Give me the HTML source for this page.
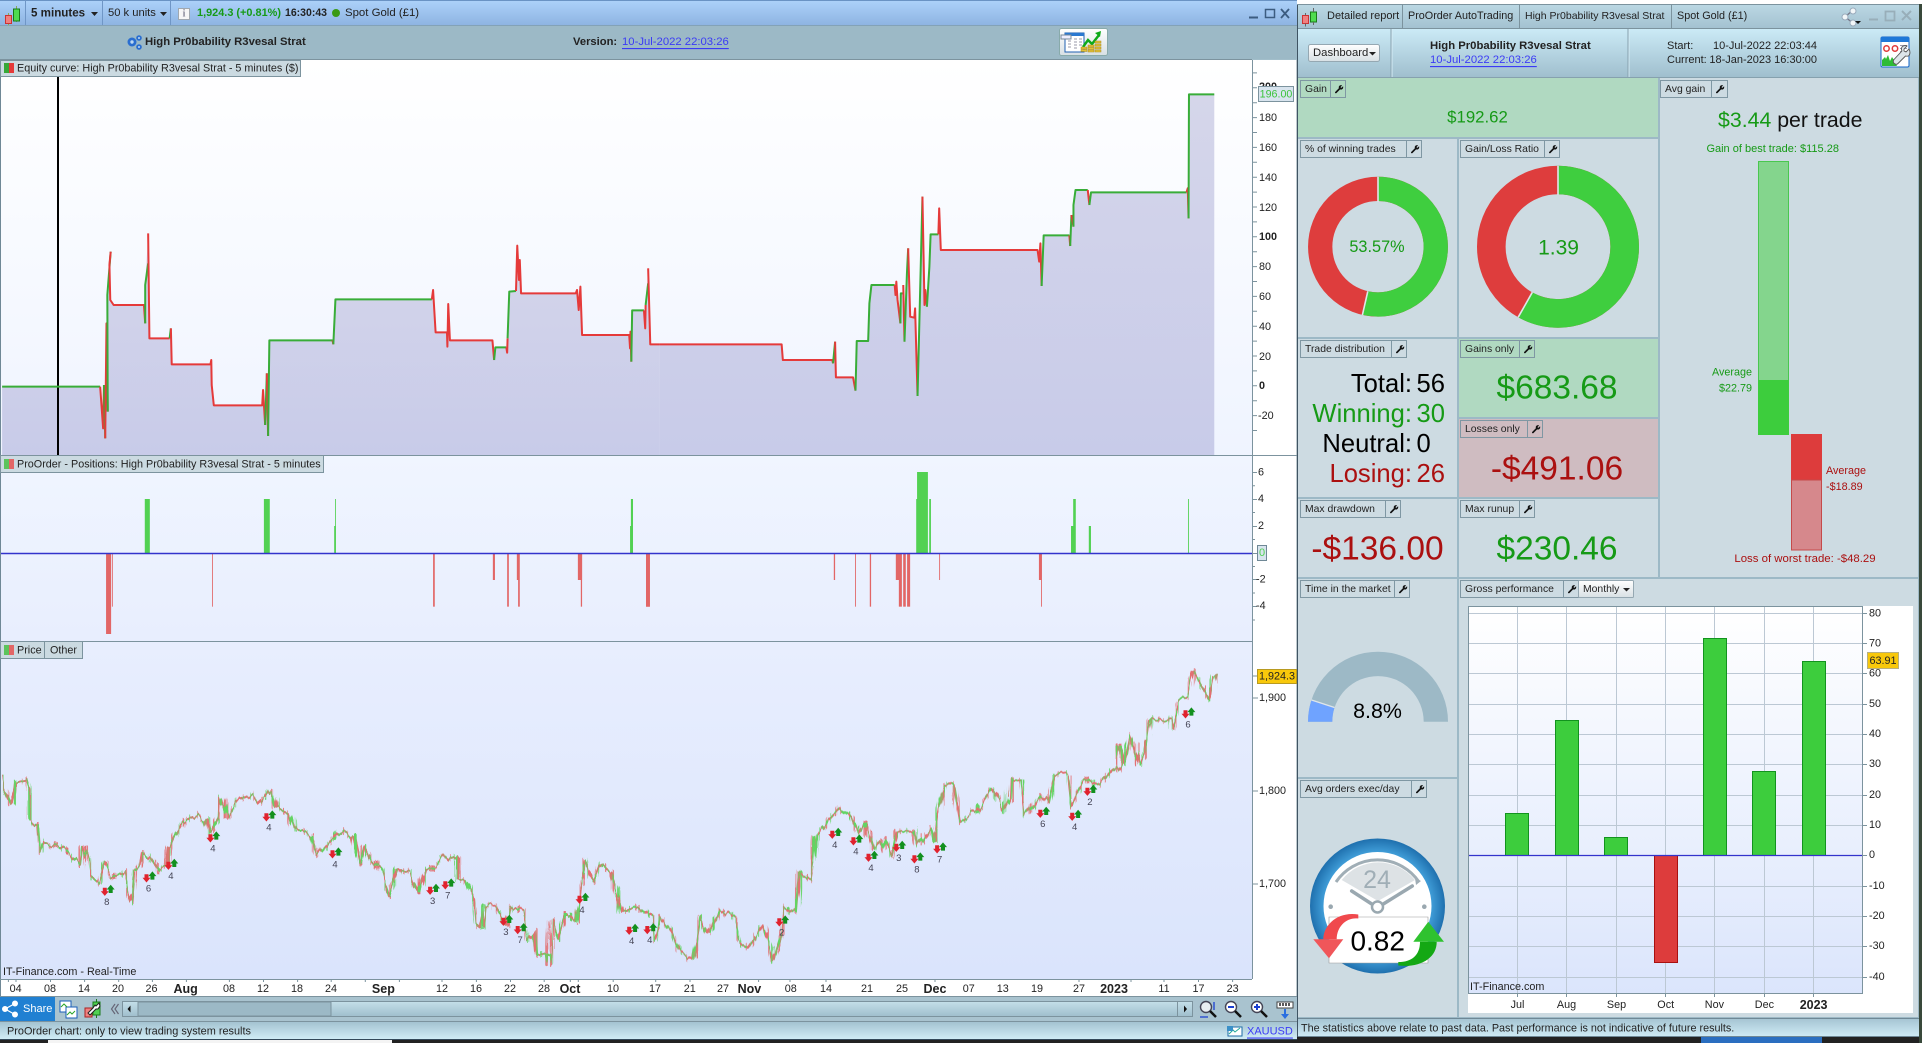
<!DOCTYPE html>
<html><head><meta charset="utf-8"><title>ProOrder report</title>
<style>
html,body{margin:0;padding:0;background:#222;overflow:hidden}
svg{display:block}
text{font-family:"Liberation Sans",Arial,sans-serif;font-size:11px;fill:#222;dominant-baseline:central;white-space:pre}
.b{font-weight:bold}.m{text-anchor:middle}.e{text-anchor:end}
.gr{fill:#169a16}.rd{fill:#ab1010}
.lk{fill:#3b3bf5;text-decoration:underline}
.ax{font-size:10.8px;fill:#222}
.lbt{font-size:10.4px}
.lb{fill:none;stroke:#7f97a3;stroke-width:1}
.eq polyline{fill:none;stroke-width:2;vector-effect:non-scaling-stroke;stroke-linejoin:round}
.eg{stroke:#38ad38}.er{stroke:#e53a3a}
.pg rect{fill:#52d152}.pr rect{fill:#e26666}
.n{font-size:9.5px;fill:#445}
</style></head>
<body>
<svg xmlns="http://www.w3.org/2000/svg" width="1922" height="1043" viewBox="0 0 1922 1043">
<defs>
<linearGradient id="gTop" x1="0" y1="0" x2="0" y2="1"><stop offset="0" stop-color="#add2fa"/><stop offset="1" stop-color="#8eb4e2"/></linearGradient>
<linearGradient id="gHead" x1="0" y1="0" x2="0" y2="1"><stop offset="0" stop-color="#cbeaf6"/><stop offset="1" stop-color="#a0bfce"/></linearGradient>
<linearGradient id="gTab" x1="0" y1="0" x2="0" y2="1"><stop offset="0" stop-color="#bcd8e4"/><stop offset="1" stop-color="#a4c2d1"/></linearGradient>
<linearGradient id="gStat" x1="0" y1="0" x2="0" y2="1"><stop offset="0" stop-color="#a4c3d1"/><stop offset="1" stop-color="#d0ecf6"/></linearGradient>
<linearGradient id="gEq" x1="0" y1="0" x2="0" y2="1"><stop offset="0" stop-color="#ffffff"/><stop offset="1" stop-color="#eff4ff"/></linearGradient>
<linearGradient id="gPos" x1="0" y1="0" x2="0" y2="1"><stop offset="0" stop-color="#f0f5ff"/><stop offset="1" stop-color="#e8eefe"/></linearGradient>
<linearGradient id="gPrice" x1="0" y1="0" x2="0" y2="1"><stop offset="0" stop-color="#e8eefe"/><stop offset="1" stop-color="#dae4fc"/></linearGradient>
<linearGradient id="gFill" x1="0" y1="0" x2="0" y2="1"><stop offset="0" stop-color="#d5d6ea"/><stop offset="1" stop-color="#c8cbe9"/></linearGradient>
<linearGradient id="gPlot" x1="0" y1="0" x2="0" y2="1"><stop offset="0" stop-color="#ffffff"/><stop offset="1" stop-color="#dbe5fc"/></linearGradient>
<linearGradient id="gBtn" x1="0" y1="0" x2="0" y2="1"><stop offset="0" stop-color="#ffffff"/><stop offset="1" stop-color="#d8e0e4"/></linearGradient>
<linearGradient id="gScr" x1="0" y1="0" x2="0" y2="1"><stop offset="0" stop-color="#c4dfe9"/><stop offset="1" stop-color="#9fbecc"/></linearGradient>
<radialGradient id="gRing" cx=".5" cy=".5" r=".5"><stop offset=".75" stop-color="#48a8e2"/><stop offset="1" stop-color="#1f70ae"/></radialGradient>
<g id="w"><path transform="translate(1.500 1.500) scale(.78)" d="M11 2.200 8.800 4.400 7.600 3.400 9.800 1.100C8.200.3 6.400.9 5.700 2.400c-.4.8-.3 1.600 0 2.300L1 9.400c-.5.6-.5 1.200 0 1.600s1.100.4 1.600-.1l4.600-4.600c.8.3 1.600.3 2.300 0 1.500-.7 2-2.600 1.500-4.100z" fill="#111"/></g>
<g id="m"><path d="M-2-4h4v3.500h2L0 4.200-4-.5h2z" fill="#e0222e"/><path d="M5.900-6.900 9.900-2.200h-2v3.500h-4v-3.500h-2z" fill="#12901e"/></g>
<pattern id="pCore" patternUnits="userSpaceOnUse" width="46.400" height="40">
<rect width="46.400" height="40" fill="#63d463"/>
<rect x="2.900" width="2.900" height="40" fill="#e27072"/>
<rect x="8.700" width="5.800" height="40" fill="#e27072"/>
<rect x="17.400" width="2.900" height="40" fill="#e27072"/>
<rect x="26.100" width="5.800" height="40" fill="#e27072"/>
<rect x="34.800" width="2.900" height="40" fill="#e27072"/>
<rect x="40.600" width="2.900" height="40" fill="#e27072"/>
</pattern>
<pattern id="pSpike" patternUnits="userSpaceOnUse" width="69.600" height="40">
<rect x="5.800" width="2.900" height="40" fill="#63d463"/>
<rect x="20.300" width="2.900" height="40" fill="#e27072"/>
<rect x="31.900" width="2.900" height="40" fill="#63d463"/>
<rect x="46.400" width="2.900" height="40" fill="#e27072"/>
<rect x="60.900" width="2.900" height="40" fill="#e27072"/>
</pattern>
<filter id="jit" filterUnits="userSpaceOnUse" x="0" y="642" width="1252" height="337" color-interpolation-filters="sRGB">
<feTurbulence type="fractalNoise" baseFrequency=".13 .006" numOctaves="3" seed="7" result="t"/>
<feDisplacementMap in="SourceGraphic" in2="t" scale="11" xChannelSelector="A" yChannelSelector="G"/>
</filter>
</defs>

<!-- base -->
<rect width="1922" height="1043" fill="#222"/>
<rect x="1297" y="0" width="625" height="4" fill="#fff"/>
<rect x="48" y="1040" width="344" height="3" fill="#f4f4f4"/>
<rect x="1701" y="1037" width="121" height="6" fill="#2a6ec0"/>
<rect x="1919" y="4" width="3" height="1039" fill="#39493b"/>

<!-- LEFT WINDOW -->
<rect x="0" y="0" width="1297" height="1039" fill="#a9c3cf"/>
<rect x="0" y="0" width="1297" height="25" fill="url(#gTop)"/>
<rect x="0" y="0" width="1297" height="1" fill="#6a93c4"/>
<path d="M25.500 0v25M102.500 0v25M170.500 0v25" stroke="#6f96c6" fill="none"/>
<path d="M0 25.500h1297" stroke="#6a8aa8"/>
<g>
<path d="M8.500 13v14M16.500 6v16" stroke="#8a5" fill="none"/>
<rect x="5.500" y="15.500" width="6" height="8" fill="#f08080" stroke="#c33"/>
<rect x="13.500" y="9" width="6" height="12" fill="#4fdb4f" stroke="#197a19"/>
</g>
<text x="31" y="13" class="b" style="font-size:11.600px">5 minutes</text>
<path d="M91 12h7l-3.500 4z" fill="#222"/>
<text x="108" y="13" style="font-size:11.200px">50 k units</text>
<path d="M160 12h7l-3.500 4z" fill="#222"/>
<rect x="178.500" y="8.500" width="11" height="11" fill="#f6f6f6" stroke="#a0a8b0"/>
<text x="184" y="14" class="m b" style="font-size:10px;fill:#889;font-family:'Liberation Serif',serif">i</text>
<text x="197" y="13" class="b gr" style="font-size:11px" textLength="84" lengthAdjust="spacingAndGlyphs">1,924.3 (+0.81%)</text>
<text x="285" y="13" class="b" style="font-size:11px" textLength="42" lengthAdjust="spacingAndGlyphs">16:30:43</text>
<circle cx="336" cy="13" r="4" fill="#3a9a14"/>
<text x="345" y="13" style="font-size:11.400px">Spot Gold (£1)</text>
<path d="M1249 17.500h9" stroke="#3c5c80" stroke-width="2"/>
<rect x="1265.500" y="9.500" width="9" height="8" fill="none" stroke="#3c5c80" stroke-width="1.500"/>
<path d="M1281 9l8 9M1289 9l-8 9" stroke="#3c5c80" stroke-width="1.800"/>

<rect x="0" y="25.500" width="1297" height="34" fill="#9cb9c6"/>
<g fill="#2a6ed0"><circle cx="132" cy="42" r="4.500"/><circle cx="139" cy="38" r="2.800"/><circle cx="139" cy="47" r="2.800"/></g>
<g fill="#bcd8f4"><circle cx="132" cy="42" r="1.700"/><circle cx="139" cy="38" r="1"/><circle cx="139" cy="47" r="1"/></g>
<text x="145" y="42" class="b" style="font-size:11.300px">High Pr0bability R3vesal Strat</text>
<text x="573" y="42" class="b" style="font-size:11.200px">Version:</text>
<text x="622" y="42" class="lk" style="font-size:11.300px">10-Jul-2022 22:03:26</text>

<rect x="1059.500" y="28.500" width="48" height="27" rx="2" fill="url(#gBtn)" stroke="#8aa"/>
<g>
<rect x="1065" y="33" width="19" height="19" fill="#fff" stroke="#1f5fb0"/>
<rect x="1065" y="33" width="19" height="3" fill="#2a78d0"/>
<rect x="1061" y="35" width="10" height="4" fill="#eef" stroke="#789"/>
<path d="M1068 41h3M1068 44h3M1068 47h3M1074 39h3M1074 42h3M1074 45h3M1074 48h3M1079 39h3M1079 42h3M1079 45h3" stroke="#99a" fill="none"/>
<path d="M1083 47l5-7 4 4 7-9" stroke="#0faa1a" stroke-width="2.500" fill="none"/><path d="M1095 33l6-2-1 6z" fill="#0faa1a"/>
<g fill="#e4c238" stroke="#a88a20" stroke-width=".5"><rect x="1081" y="47" width="6" height="2"/><rect x="1081" y="49.500" width="6" height="2"/><rect x="1088" y="45" width="6" height="2"/><rect x="1088" y="47.500" width="6" height="2"/><rect x="1088" y="50" width="6" height="2"/><rect x="1095" y="41" width="6" height="2"/><rect x="1095" y="44" width="6" height="2"/><rect x="1095" y="47" width="6" height="2"/><rect x="1095" y="50" width="6" height="2"/></g>
</g>

<!-- chart backgrounds -->
<rect x="0" y="60" width="1297" height="395" fill="url(#gEq)"/>
<rect x="0" y="455" width="1297" height="186" fill="url(#gPos)"/>
<rect x="0" y="641" width="1297" height="338" fill="url(#gPrice)"/>
<rect x="0" y="979" width="1297" height="18" fill="#fff"/>
<rect x="1253" y="60" width="44" height="919" fill="#fff"/>

<!-- equity fill -->
<polygon transform="scale(.42088 .33333)" fill="url(#gFill)" points="5,1160 238,1160 245,1285 247,1155 250,1315 253,970 256,1235 255,885 263,755 262,900 270,915 342,915 345,970 345,855 352,700 355,1015 403,1015 406,985 408,1093 500,1093 503,1155 508,1216 623,1216 625,1170 630,1275 634,1120 637,1308 640,1021 790,1021 792,1033 797,898 1026,898 1029,870 1035,997 1062,997 1063,1040 1065,912 1069,1021 1170,1021 1174,1080 1177,1042 1203,1042 1205,1058 1206,1015 1210,875 1226,873 1229,737 1233,840 1235,780 1238,880 1368,880 1371,870 1375,930 1379,860 1383,1005 1495,1005 1497,1045 1498,995 1500,1085 1502,931 1530,931 1533,985 1534,915 1540,805 1545,1033 1568,1033 1568,1365 5,1365"/>
<polygon transform="translate(660 0) scale(.40816 .33333)" fill="url(#gFill)" points="0,1033 298,1033 301,1080 422,1080 424,1090 429,1025 431,1132 473,1132 479,1172 482,1023 510,1023 513,910 518,855 575,855 577,885 579,845 582,900 589,970 590,880 594,880 596,855 599,1025 605,820 608,745 613,950 623,953 625,925 631,1188 640,740 643,590 648,915 650,870 654,920 660,800 663,703 682,703 684,625 688,750 925,750 929,785 932,730 935,858 940,706 1003,706 1005,738 1008,645 1013,680 1013,615 1018,570 1048,570 1052,615 1056,577 1290,577 1293,565 1295,655 1296,283 1358,283 1358,1365 0,1365"/>
<rect x="57" y="77" width="2" height="378" fill="#000"/>
<!-- equity lines -->
<g class="eq" transform="scale(.42088 .33333)">
<polyline class="eg" points="5,1160 238,1160"/>
<polyline class="er" points="238,1160 245,1285 247,1155"/>
<polyline class="eg" points="247,1155 250,1315"/>
<polyline class="er" points="250,1315 253,970 256,1235"/>
<polyline class="eg" points="256,1235 255,885 263,755"/>
<polyline class="er" points="263,755 260,795 262,900 270,915 342,915 345,970"/>
<polyline class="eg" points="345,970 345,855 352,790"/>
<polyline class="er" points="352,700 355,1015 403,1015"/>
<polyline class="eg" points="403,1015 406,985"/>
<polyline class="er" points="406,985 408,1093 500,1093 502,1080 503,1155 508,1216 623,1216 625,1170 630,1275"/>
<polyline class="eg" points="630,1275 634,1120"/>
<polyline class="er" points="634,1120 637,1308"/>
<polyline class="eg" points="637,1308 640,1021 790,1021"/>
<polyline class="er" points="790,1021 792,1033"/>
<polyline class="eg" points="792,1033 797,898 1026,898"/>
<polyline class="er" points="1026,898 1029,870 1035,997 1062,997 1063,1040 1065,912 1069,1021 1170,1021 1174,1080"/>
<polyline class="eg" points="1174,1080 1177,1042 1203,1042"/>
<polyline class="er" points="1203,1042 1205,1058 1206,1015"/>
<polyline class="eg" points="1206,1015 1210,875 1226,873"/>
<polyline class="er" points="1226,873 1229,737 1233,840 1235,780 1238,880 1368,880 1371,870 1375,930 1379,860 1383,1005 1495,1005 1497,1045 1498,995 1500,1085"/>
<polyline class="eg" points="1500,1085 1502,931 1530,931"/>
<polyline class="er" points="1530,931 1533,985 1534,915"/>
<polyline class="eg" points="1534,915 1540,850"/>
<polyline class="er" points="1540,805 1545,1033 1568,1033"/>
</g>
<g class="eq" transform="translate(660 0) scale(.40816 .33333)">
<polyline class="er" points="0,1033 298,1033 301,1080 422,1080 424,1090"/>
<polyline class="eg" points="424,1090 429,1025"/>
<polyline class="er" points="429,1025 431,1132 473,1132 479,1172"/>
<polyline class="eg" points="479,1172 482,1023 510,1023 513,910 518,855 575,855"/>
<polyline class="er" points="575,855 577,885 579,845 582,900 589,970"/>
<polyline class="eg" points="589,970 590,880 594,880"/>
<polyline class="er" points="596,855 599,1025"/>
<polyline class="eg" points="599,1025 605,820 608,745"/>
<polyline class="er" points="608,745 613,950 623,953 625,925 631,1188"/>
<polyline class="eg" points="631,1188 640,740 643,590"/>
<polyline class="er" points="643,590 648,915 650,870 654,920"/>
<polyline class="eg" points="654,920 660,800 663,703 682,703"/>
<polyline class="er" points="682,703 684,625 688,750 925,750 929,785 932,730 935,858"/>
<polyline class="eg" points="935,858 940,706 1003,706"/>
<polyline class="er" points="1003,706 1005,738"/>
<polyline class="eg" points="1005,738 1008,645"/>
<polyline class="er" points="1008,645 1013,680"/>
<polyline class="eg" points="1013,680 1013,615 1018,570 1048,570"/>
<polyline class="er" points="1048,570 1052,615"/>
<polyline class="eg" points="1052,615 1056,577 1290,577"/>
<polyline class="er" points="1290,577 1293,565 1295,655"/>
<polyline class="eg" points="1295,655 1296,283 1358,283"/>
</g>

<!-- panel lines -->
<path d="M.5 60v937" stroke="#6f8896" fill="none"/>
<path d="M0 59.500h1252M0 455.500h1297M0 641.500h1252M0 979.500h1252" stroke="#7c939e" fill="none"/>
<path d="M1252.500 60v919" stroke="#7c939e" fill="none"/>
<path d="M1297 60v937" stroke="#7c939e" fill="none"/>

<!-- equity axis -->
<path stroke="#7c939e" fill="none" d="M1252 72.900h5M1252 87.800h5M1252 102.700h5M1252 117.600h5M1252 132.500h5M1252 147.400h5M1252 162.300h5M1252 177.200h5M1252 192.100h5M1252 207h5M1252 221.900h5M1252 236.800h5M1252 251.700h5M1252 266.600h5M1252 281.500h5M1252 296.400h5M1252 311.300h5M1252 326.200h5M1252 341.100h5M1252 356h5M1252 370.900h5M1252 385.800h5M1252 400.700h5M1252 415.600h5M1252 430.500h5"/>
<g>
<text x="1259" y="87" class="ax b">200</text>
<text x="1259" y="118" class="ax">180</text>
<text x="1259" y="148" class="ax">160</text>
<text x="1259" y="178" class="ax">140</text>
<text x="1259" y="208" class="ax">120</text>
<text x="1259" y="237" class="ax b">100</text>
<text x="1259" y="267" class="ax">80</text>
<text x="1259" y="297" class="ax">60</text>
<text x="1259" y="327" class="ax">40</text>
<text x="1259" y="357" class="ax">20</text>
<text x="1259" y="386" class="ax b">0</text>
<text x="1258" y="416" class="ax">-20</text>
</g>
<rect x="1258.500" y="86.500" width="35" height="15" fill="#d8e4ee" stroke="#7c939e"/>
<text x="1276" y="94.500" class="m" style="fill:#3cc43c;font-size:10.700px">196.00</text>

<!-- legends -->
<rect x=".5" y="60.500" width="300" height="16" fill="#cbdae1" stroke="#7c939e"/>
<rect x="4" y="63" width="5" height="10" fill="#38a838"/><rect x="9" y="63" width="5" height="10" fill="#e53a3a"/>
<text x="17" y="68.500" style="font-size:10.800px">Equity curve: High Pr0bability R3vesal Strat - 5 minutes ($)</text>

<rect x=".5" y="455.500" width="323" height="17" fill="#cbdae1" stroke="#7c939e"/>
<rect x="4" y="459" width="5" height="10" fill="#5cc45c"/><rect x="9" y="459" width="5" height="10" fill="#e26666"/>
<text x="17" y="464.500" style="font-size:10.800px">ProOrder - Positions: High Pr0bability R3vesal Strat - 5 minutes</text>

<rect x=".5" y="641.500" width="82" height="17" fill="#cbdae1" stroke="#7c939e"/>
<path d="M44.500 642v16" stroke="#7c939e"/>
<rect x="4" y="645" width="5" height="10" fill="#5cc45c"/><rect x="9" y="645" width="5" height="10" fill="#e26666"/>
<text x="17" y="650.500" style="font-size:10.800px">Price</text>
<text x="50" y="650.500" style="font-size:10.800px">Other</text>

<!-- positions bars -->
<g transform="translate(0 440) scale(.42088 .33333)">
<g class="pg">
<rect x="344" y="177" width="12" height="163"/><rect x="627" y="177" width="14" height="163"/>
<rect x="794" y="258" width="4" height="82"/><rect x="796" y="177" width="2" height="163"/>
<rect x="1499" y="177" width="5" height="163"/><rect x="1497" y="258" width="3" height="82"/>
</g>
<g class="pr">
<rect x="252" y="340" width="12" height="242"/><rect x="266" y="340" width="2" height="160"/>
<rect x="504" y="340" width="2" height="160"/><rect x="1029" y="340" width="4" height="160"/>
<rect x="1171" y="340" width="5" height="80"/><rect x="1205" y="340" width="4" height="160"/>
<rect x="1228" y="340" width="5" height="80"/><rect x="1231" y="340" width="4" height="160"/>
<rect x="1373" y="340" width="10" height="80"/><rect x="1380" y="340" width="3" height="160"/>
<rect x="1535" y="340" width="9" height="160"/>
</g>
</g>
<g transform="translate(620 460) scale(.43367 .33333)">
<g class="pg">
<rect x="685" y="36" width="25" height="244"/><rect x="683" y="117" width="3" height="163"/><rect x="713" y="117" width="4" height="163"/>
<rect x="1045" y="117" width="6" height="163"/><rect x="1040" y="198" width="6" height="82"/><rect x="1081" y="198" width="5" height="82"/><rect x="1310" y="117" width="2" height="163"/>
</g>
<g class="pr">
<rect x="60" y="280" width="9" height="160"/>
<rect x="493" y="280" width="3" height="80"/><rect x="542" y="280" width="2" height="160"/><rect x="576" y="280" width="3" height="160"/>
<rect x="636" y="280" width="8" height="80"/><rect x="643" y="280" width="7" height="160"/><rect x="653" y="280" width="6" height="160"/><rect x="662" y="280" width="7" height="160"/>
<rect x="736" y="280" width="2" height="80"/><rect x="966" y="280" width="6" height="80"/><rect x="971" y="280" width="2" height="160"/>
</g>
</g>
<path d="M1 553.500h1251" stroke="#3333cc" stroke-width="1.400"/>
<path stroke="#7c939e" fill="none" d="M1252 472.500h5M1252 485.800h3M1252 499.500h5M1252 512.500h3M1252 526.500h5M1252 539.500h3M1252 553.500h5M1252 566.500h3M1252 579.500h5M1252 593h3M1252 606.500h5M1252 620h3"/>
<text x="1258" y="472.500" class="ax">6</text><text x="1258" y="499" class="ax">4</text><text x="1258" y="526" class="ax">2</text>
<rect x="1257.500" y="545.500" width="9" height="15" fill="#d8e4ee" stroke="#6f8896"/>
<text x="1262" y="553" class="m" style="fill:#4fd04f">0</text>
<text x="1256" y="579.500" class="ax">-2</text><text x="1256" y="606" class="ax">-4</text>

<!-- price series -->
<g filter="url(#jit)" fill="none" stroke-linejoin="round" stroke-linecap="butt">
<g transform="translate(0 740) scale(.42088 .33333)">
<polyline stroke="url(#pSpike)" stroke-width="17" points="5,100 10,140 28,190 35,130 65,125 72,150 72,240 90,255 95,340 105,310 135,315 165,340 190,370 195,320 210,360 215,410 235,430 250,370 265,410 295,395 305,460 313,488 320,390 335,375 340,340 360,360 375,390 400,380 403,325 415,290 435,250 470,220 490,240 498,280 520,230 522,170 540,235 565,185 600,160 620,190 645,150 655,200 690,225 700,265 740,285 755,345 780,310 815,270 840,290 855,375 865,320 885,365 905,385 925,465 945,390 975,395 995,450 1010,385 1040,375 1065,345 1085,355 1085,420 1110,425 1125,470 1130,540 1145,560 1150,500 1175,500 1200,550 1210,490 1240,510 1255,600 1270,580 1275,650 1300,640 1305,668 1310,540 1325,595 1345,520 1365,540 1375,440 1390,360 1410,420 1425,370 1450,400 1475,520 1520,500 1550,530 1555,600 1568,560"/>
<polyline stroke="url(#pCore)" stroke-width="5.500" points="5,100 10,140 28,190 35,130 65,125 72,150 72,240 90,255 95,340 105,310 135,315 165,340 190,370 195,320 210,360 215,410 235,430 250,370 265,410 295,395 305,460 313,488 320,390 335,375 340,340 360,360 375,390 400,380 403,325 415,290 435,250 470,220 490,240 498,280 520,230 522,170 540,235 565,185 600,160 620,190 645,150 655,200 690,225 700,265 740,285 755,345 780,310 815,270 840,290 855,375 865,320 885,365 905,385 925,465 945,390 975,395 995,450 1010,385 1040,375 1065,345 1085,355 1085,420 1110,425 1125,470 1130,540 1145,560 1150,500 1175,500 1200,550 1210,490 1240,510 1255,600 1270,580 1275,650 1300,640 1305,668 1310,540 1325,595 1345,520 1365,540 1375,440 1390,360 1410,420 1425,370 1450,400 1475,520 1520,500 1550,530 1555,600 1568,560"/>
</g>
<g transform="translate(640 640) scale(.42088 .33333)">
<polyline stroke="url(#pSpike)" stroke-width="17" points="47,860 50,830 75,870 100,935 125,955 140,830 160,880 190,810 225,840 235,900 260,920 290,860 300,900 312,965 335,870 340,790 370,820 378,700 410,720 418,590 445,540 475,500 500,530 520,580 535,550 555,630 575,600 597,650 610,575 650,570 660,620 695,560 700,600 705,530 720,445 745,430 760,545 800,510 840,445 865,510 878,480 880,420 905,425 915,525 955,470 970,490 985,400 1015,405 1023,495 1060,420 1090,440 1125,390 1140,370 1135,315 1145,370 1160,280 1183,380 1200,340 1212,235 1260,240 1265,265 1285,180 1300,170 1312,95 1330,130 1355,180 1365,105"/>
<polyline stroke="url(#pCore)" stroke-width="5.500" points="47,860 50,830 75,870 100,935 125,955 140,830 160,880 190,810 225,840 235,900 260,920 290,860 300,900 312,965 335,870 340,790 370,820 378,700 410,720 418,590 445,540 475,500 500,530 520,580 535,550 555,630 575,600 597,650 610,575 650,570 660,620 695,560 700,600 705,530 720,445 745,430 760,545 800,510 840,445 865,510 878,480 880,420 905,425 915,525 955,470 970,490 985,400 1015,405 1023,495 1060,420 1090,440 1125,390 1140,370 1135,315 1145,370 1160,280 1183,380 1200,340 1212,235 1260,240 1265,265 1285,180 1300,170 1312,95 1330,130 1355,180 1365,105"/>
</g>
</g>

<!-- trade markers -->
<g>
<g transform="translate(104.800 891.700)"><use href="#m"/><text x="2" y="10.700" class="n m">8</text></g>
<g transform="translate(146.500 878.300)"><use href="#m"/><text x="2" y="10.700" class="n m">6</text></g>
<g transform="translate(168.400 865.700)"><use href="#m"/><text x="2.500" y="10.700" class="n m">4</text></g>
<g transform="translate(210.400 838.300)"><use href="#m"/><text x="2.500" y="10.700" class="n m">4</text></g>
<g transform="translate(266.400 817.300)"><use href="#m"/><text x="2.500" y="10.700" class="n m">4</text></g>
<g transform="translate(332.500 854.300)"><use href="#m"/><text x="2.500" y="10.700" class="n m">4</text></g>
<g transform="translate(430.100 890.700)"><use href="#m"/><text x="2.500" y="10.700" class="n m">3</text></g>
<g transform="translate(445.300 885.300)"><use href="#m"/><text x="2.500" y="10.700" class="n m">7</text></g>
<g transform="translate(503.400 921.700)"><use href="#m"/><text x="2.500" y="10.700" class="n m">3</text></g>
<g transform="translate(517.700 930)"><use href="#m"/><text x="2.500" y="10.700" class="n m">7</text></g>
<g transform="translate(579.500 899.700)"><use href="#m"/><text x="2.500" y="10.700" class="n m">4</text></g>
<g transform="translate(629.200 930.700)"><use href="#m"/><text x="2.500" y="10.700" class="n m">4</text></g>
<g transform="translate(647.300 930)"><use href="#m"/><text x="2.500" y="10.700" class="n m">4</text></g>
<g transform="translate(779.300 922.300)"><use href="#m"/><text x="2.500" y="10.700" class="n m">2</text></g>
<g transform="translate(832.300 834.700)"><use href="#m"/><text x="2.500" y="10.700" class="n m">4</text></g>
<g transform="translate(853.400 841.300)"><use href="#m"/><text x="2.500" y="10.700" class="n m">4</text></g>
<g transform="translate(868.500 857.700)"><use href="#m"/><text x="2.500" y="10.700" class="n m">4</text></g>
<g transform="translate(896.300 847.700)"><use href="#m"/><text x="2.500" y="10.700" class="n m">3</text></g>
<g transform="translate(914.400 859.300)"><use href="#m"/><text x="2.500" y="10.700" class="n m">8</text></g>
<g transform="translate(937.100 849.300)"><use href="#m"/><text x="2.500" y="10.700" class="n m">7</text></g>
<g transform="translate(1040.300 813.700)"><use href="#m"/><text x="2.500" y="10.700" class="n m">6</text></g>
<g transform="translate(1072.200 816.700)"><use href="#m"/><text x="2.500" y="10.700" class="n m">4</text></g>
<g transform="translate(1087.400 791.700)"><use href="#m"/><text x="2.500" y="10.700" class="n m">2</text></g>
<g transform="translate(1185.500 714.300)"><use href="#m"/><text x="2.500" y="10.700" class="n m">6</text></g>
</g>
<text x="3" y="972" style="font-size:10.800px">IT-Finance.com - Real-Time</text>
<path stroke="#7c939e" fill="none" d="M1252 676h6M1252 698h6M1252 791h6M1252 884h6"/>
<text x="1259" y="698" class="ax">1,900</text><text x="1259" y="791" class="ax">1,800</text><text x="1259" y="884" class="ax">1,700</text>
<rect x="1257.500" y="669.500" width="39" height="14" fill="#f8c80b" stroke="#b89a20"/>
<text x="1277" y="676.500" class="m" style="font-size:10.800px">1,924.3</text>

<!-- x axis -->
<path stroke="#7c939e" fill="none" d="M8.400 979v3M16 979v3M50.500 979v3M84.600 979v3M118.700 979v3M152.400 979v3M186.400 979v3M229.400 979v3M263.500 979v3M297.600 979v3M331.200 979v3M365.300 979v3M399.400 979v3M442 979v3M476.400 979v3M510.500 979v3M544.200 979v3M570.300 979v3M578.300 979v3M613.200 979v3M655.700 979v3M690 979v3M758.600 979v3M790 979v3M826 979v3M935 979v3M1079 979v3M1131 979v3M1164 979v3M1198.500 979v3M1232.600 979v3"/>
<g>
<text x="15.600" y="989" class="m ax">04</text><text x="50" y="989" class="m ax">08</text><text x="84" y="989" class="m ax">14</text><text x="118" y="989" class="m ax">20</text><text x="151.500" y="989" class="m ax">26</text><text x="185.600" y="989" class="m b" style="font-size:12.500px">Aug</text><text x="229" y="989" class="m ax">08</text><text x="263" y="989" class="m ax">12</text><text x="297" y="989" class="m ax">18</text><text x="331" y="989" class="m ax">24</text><text x="383.400" y="989" class="m b" style="font-size:12.500px">Sep</text><text x="442" y="989" class="m ax">12</text><text x="476" y="989" class="m ax">16</text><text x="510" y="989" class="m ax">22</text><text x="544" y="989" class="m ax">28</text><text x="570" y="989" class="m b" style="font-size:12.500px">Oct</text><text x="613" y="989" class="m ax">10</text><text x="655" y="989" class="m ax">17</text><text x="689.700" y="989" class="m ax">21</text><text x="723" y="989" class="m ax">27</text><text x="749.400" y="989" class="m b" style="font-size:12.500px">Nov</text><text x="790.700" y="989" class="m ax">08</text><text x="826" y="989" class="m ax">14</text><text x="867" y="989" class="m ax">21</text><text x="902" y="989" class="m ax">25</text><text x="935" y="989" class="m b" style="font-size:12.500px">Dec</text><text x="968.700" y="989" class="m ax">07</text><text x="1002.800" y="989" class="m ax">13</text><text x="1037" y="989" class="m ax">19</text><text x="1079" y="989" class="m ax">27</text><text x="1114" y="989" class="m b" style="font-size:12.500px">2023</text><text x="1164" y="989" class="m ax">11</text><text x="1198.500" y="989" class="m ax">17</text><text x="1232.600" y="989" class="m ax">23</text>
</g>

<!-- toolbar -->
<rect x="0" y="997" width="1297" height="25" fill="#a9c3cf"/>
<path d="M0 996.500h1297M0 1021.500h1297" stroke="#7c939e"/>
<rect x="0" y="997" width="55" height="24" fill="#2080d2"/>
<g fill="#fff" stroke="#fff"><circle cx="5" cy="1009" r="2.500"/><circle cx="15" cy="1003.500" r="2.500"/><circle cx="15" cy="1014.500" r="2.500"/><path d="M5 1009l10-5.500M5 1009l10 5.500" stroke-width="1.200" fill="none"/></g>
<text x="23" y="1009" style="fill:#fff;font-size:11px">Share</text>
<g>
<rect x="60" y="1001" width="11" height="11" fill="#fff" stroke="#1a5fb8"/><rect x="66" y="1007" width="11" height="11" fill="#fff" stroke="#1a5fb8"/>
<path d="M61 1007l3-3 3 3M67 1015l3-3 2 2 3-3" stroke="#2aa52a" fill="none"/>
<rect x="85" y="1008" width="7" height="9" fill="#ef8080" stroke="#a22"/>
<rect x="93" y="1002" width="7" height="13" fill="#52d152" stroke="#197a19"/>
<path d="M96.500 999v3M96.500 1015v3" stroke="#197a19"/>
<path d="M99 1003l-3 3-1-1-2 3-5 5 2 2 6-6 2 0 2-3z" fill="#fff" stroke="#222"/>
</g>
<path d="M115 1004l-3.500 5 3.500 5M118.500 1004l-3.500 5 3.500 5" stroke="#667" fill="none" stroke-width="1.200"/>
<rect x="122.500" y="1001.500" width="1070" height="15" fill="url(#gScr)" stroke="#7c939e"/>
<rect x="138" y="1002" width="193" height="14" fill="#9cb9c6" stroke="#7c939e"/>
<path d="M127.500 1009l3-3.500v7zM1187 1009l-3-3.500v7z" fill="#111"/>
<path d="M1177.500 1002v14" stroke="#7c939e"/>
<g fill="none" stroke="#111">
<circle cx="1206" cy="1007" r="5.500" stroke="#445" stroke-width="1.400" fill="#e8eef2"/><path d="M1210 1011l6 6" stroke-width="2.500"/>
<path d="M1200 1017h8M1214 1002v8" stroke="#1b3fd0" stroke-width="1.300"/>
<circle cx="1231" cy="1007" r="5.500" stroke="#445" stroke-width="1.400" fill="#fff"/><path d="M1235 1011l6 6" stroke-width="2.500"/><path d="M1228 1007h6" stroke="#1b3fd0" stroke-width="2"/>
<circle cx="1257" cy="1007" r="5.500" stroke="#445" stroke-width="1.400" fill="#fff"/><path d="M1261 1011l6 6" stroke-width="2.500"/><path d="M1254 1007h6M1257 1004v6" stroke="#1b3fd0" stroke-width="2"/>
</g>
<rect x="1277" y="1002" width="16" height="6" fill="#fff" stroke="#444"/>
<path d="M1280 1003v3M1283 1003v3M1286 1003v3M1289 1003v3" stroke="#222" stroke-width="1.500"/>
<path d="M1285 1009v6" stroke="#2a6ee0" stroke-width="2"/><path d="M1281 1014h8l-4 5z" fill="#2a6ee0"/>

<!-- left status -->
<rect x="0" y="1022" width="1297" height="17" fill="url(#gStat)"/>
<path d="M0 1039.500h1297" stroke="#33495a"/>
<text x="7" y="1031.500" style="font-size:10.900px">ProOrder chart: only to view trading system results</text>
<rect x="1228" y="1027" width="14" height="9" fill="#fff" stroke="#1d6ea8"/><path d="M1229 1034l4-4 2 2 5-4" stroke="#2a9" fill="none"/><rect x="1227" y="1026" width="6" height="5" fill="#3a90c8"/>
<text x="1247" y="1031.500" class="lk" style="font-size:11px">XAUUSD</text>

<!-- RIGHT WINDOW -->
<rect x="1297" y="4" width="622" height="1033" fill="#9db9c6"/>
<path d="M1297.500 4v1033" stroke="#3f5463"/>
<rect x="1298" y="4" width="621" height="24" fill="url(#gTab)"/>
<path d="M1297 4.500h622" stroke="#7c939e"/>
<path d="M1298 28.500h621M1402.500 5v23M1519.500 5v23M1671.500 5v23" stroke="#7c939e" fill="none"/>
<rect x="1302.500" y="15.500" width="6" height="8" fill="#f08080" stroke="#c33"/>
<rect x="1310.500" y="12" width="6" height="10" fill="#4fdb4f" stroke="#197a19"/>
<path d="M1305.500 13v2M1305.500 23.500v3M1313.500 8v4M1313.500 22v3" stroke="#666"/>
<text x="1327" y="16" style="font-size:11px">Detailed report</text>
<text x="1408" y="16" style="font-size:10.800px">ProOrder AutoTrading</text>
<text x="1525" y="16" style="font-size:10.500px">High Pr0bability R3vesal Strat</text>
<text x="1677" y="16" style="font-size:10.800px">Spot Gold (£1)</text>
<g fill="#f2f6f8"><path d="M1845 17l8-7M1845 17l8 6" stroke="#778" stroke-width="1.300" fill="none"/><circle cx="1845" cy="17" r="3" stroke="#9ab"/><circle cx="1853" cy="11" r="3" stroke="#9ab"/><circle cx="1853" cy="23" r="3" stroke="#9ab"/></g>
<path d="M1855 21h6l-3 3z" fill="#111"/>
<path d="M1869 19.500h9" stroke="#98aeb9" stroke-width="2"/>
<rect x="1885.500" y="11.500" width="9" height="9" fill="none" stroke="#98aeb9" stroke-width="1.800"/>
<path d="M1902 11l9 9M1911 11l-9 9" stroke="#98aeb9" stroke-width="2"/>

<!-- right header -->
<rect x="1298" y="29" width="621" height="48" fill="url(#gHead)"/>
<path d="M1298 77.500h621M1391 29v48M1628 29v48" stroke="#86a1ae" fill="none"/>
<path d="M1392 29v48M1629 29v48" stroke="#d4ecf5"/>
<rect x="1308.500" y="44.500" width="71" height="17" rx="2" fill="url(#gBtn)" stroke="#95a8b2"/>
<text x="1313" y="53" style="font-size:11.300px">Dashboard</text>
<path d="M1369 52h7l-3.500 3.500z" fill="#222"/>
<text x="1430" y="46" class="b" style="font-size:11.300px">High Pr0bability R3vesal Strat</text>
<text x="1430" y="60" class="lk" style="font-size:11.300px">10-Jul-2022 22:03:26</text>
<text x="1667" y="46" style="font-size:11px">Start:</text>
<text x="1817" y="46" class="e" style="font-size:11px">10-Jul-2022 22:03:44</text>
<text x="1667" y="60" style="font-size:11px">Current:</text>
<text x="1817" y="60" class="e" style="font-size:11px">18-Jan-2023 16:30:00</text>
<g>
<rect x="1881" y="37" width="28" height="30" rx="1.500" fill="#fff" stroke="#1565c8" stroke-width="1"/>
<rect x="1881" y="37" width="28" height="5" fill="#1e78d8"/>
<circle cx="1886.500" cy="48.500" r="2.700" fill="none" stroke="#e03a3a" stroke-width="1.500"/><circle cx="1895" cy="48.500" r="2.700" fill="none" stroke="#e03a3a" stroke-width="1.500"/>
<path d="M1900 45.500h7M1900 48.500h7M1900 51.500h7" stroke="#99a" fill="none"/>
<path d="M1882 66v-6l3-3 1 2 2-4 2 6 2-4 2 3 3 6z" fill="#2fbb36"/>
<path d="M1909 49l-3 3-2-1 0-2 3-3c-2-1-5 0-5.500 2-.3 1 0 2 .4 3L1894 59.500c-1 1-1 3 .3 4s2.700 1 3.700 0l7.500-7.500c1 .3 2 .3 3 0 1.600-1 2-4.500.5-7z" fill="#dde5ea" stroke="#555" stroke-width=".9"/>
</g>

<!-- dashboard panels -->
<g fill="#cddbe2">
<rect x="1298" y="78" width="360" height="59" fill="#b0d9c1"/>
<rect x="1298" y="139" width="159" height="198"/>
<rect x="1459" y="139" width="199" height="198"/>
<rect x="1660" y="78" width="258" height="499"/>
<rect x="1298" y="339" width="159" height="158"/>
<rect x="1459" y="339" width="199" height="78" fill="#b0d9c1"/>
<rect x="1459" y="419" width="199" height="78" fill="#cfbcc1"/>
<rect x="1298" y="499" width="159" height="78"/>
<rect x="1459" y="499" width="199" height="78"/>
<rect x="1298" y="579" width="159" height="198"/>
<rect x="1298" y="779" width="159" height="238"/>
<rect x="1459" y="579" width="459" height="438"/>
</g>

<!-- labels -->
<g class="lb">
<rect x="1300.500" y="80.500" width="45" height="17"/><path d="M1330.500 81v16"/>
<rect x="1300.500" y="140.500" width="121" height="17"/><path d="M1406.500 141v16"/>
<rect x="1460.500" y="140.500" width="99" height="17"/><path d="M1544.500 141v16"/>
<rect x="1660.500" y="80.500" width="67" height="17"/><path d="M1711.500 81v16"/>
<rect x="1300.500" y="340.500" width="106" height="17"/><path d="M1391.500 341v16"/>
<rect x="1460.500" y="340.500" width="74" height="17"/><path d="M1519.500 341v16"/>
<rect x="1460.500" y="420.500" width="82" height="17"/><path d="M1527.500 421v16"/>
<rect x="1300.500" y="500.500" width="100" height="17"/><path d="M1385.500 501v16"/>
<rect x="1460.500" y="500.500" width="74" height="17"/><path d="M1519.500 501v16"/>
<rect x="1300.500" y="580.500" width="109" height="17"/><path d="M1394.500 581v16"/>
<rect x="1460.500" y="580.500" width="103" height="17"/>
<rect x="1300.500" y="780.500" width="126" height="17"/><path d="M1411.500 781v16"/>
</g>
<rect x="1563.500" y="580.500" width="15" height="17" fill="none" stroke="#7f97a3"/>
<rect x="1578.500" y="580.500" width="55" height="17" rx="1" fill="url(#gBtn)" stroke="#95a8b2"/>
<text x="1305" y="89.500" class="lbt">Gain</text><use href="#w" x="1333" y="83"/>
<text x="1305" y="149.500" class="lbt">% of winning trades</text><use href="#w" x="1409" y="143"/>
<text x="1465" y="149.500" class="lbt">Gain/Loss Ratio</text><use href="#w" x="1547" y="143"/>
<text x="1665" y="89.500" class="lbt">Avg gain</text><use href="#w" x="1714" y="83"/>
<text x="1305" y="349.500" class="lbt">Trade distribution</text><use href="#w" x="1394" y="343"/>
<text x="1465" y="349.500" class="lbt">Gains only</text><use href="#w" x="1522" y="343"/>
<text x="1465" y="429.500" class="lbt">Losses only</text><use href="#w" x="1530" y="423"/>
<text x="1305" y="509.500" class="lbt">Max drawdown</text><use href="#w" x="1388" y="503"/>
<text x="1465" y="509.500" class="lbt">Max runup</text><use href="#w" x="1522" y="503"/>
<text x="1305" y="589.500" class="lbt">Time in the market</text><use href="#w" x="1397" y="583"/>
<text x="1465" y="589.500" class="lbt">Gross performance</text><use href="#w" x="1566" y="583"/>
<text x="1583" y="589.500" class="lbt">Monthly</text><path d="M1623 588h7l-3.500 3.500z" fill="#222"/>
<text x="1305" y="789.500" class="lbt">Avg orders exec/day</text><use href="#w" x="1414" y="783"/>

<!-- values -->
<text x="1477.500" y="117" class="m gr" style="font-size:16.800px">$192.62</text>
<text x="1718" y="120" class="gr" style="font-size:21.300px">$3.44<tspan style="fill:#111"> per trade</tspan></text>
<text x="1772.700" y="149" class="m gr" style="font-size:11px">Gain of best trade: $115.28</text>

<!-- donut 1 -->
<g fill="none" transform="rotate(-90 1378 246.700)">
<circle cx="1378" cy="246.700" r="57.800" stroke="#de3d3d" stroke-width="24.300"/>
<circle cx="1378" cy="246.700" r="57.800" stroke="#3fce3f" stroke-width="24.300" pathLength="100" stroke-dasharray="53.570 46.430"/>
</g>
<path d="M1378 176.700v25M1362.400 315L1367.800 291.300" stroke="#dfe6ea" stroke-width="1.600" fill="none"/>
<text x="1377" y="247" class="m gr" style="font-size:16.300px">53.57%</text>
<!-- donut 2 -->
<g fill="none" transform="rotate(-90 1558 246.700)">
<circle cx="1558" cy="246.700" r="66.700" stroke="#de3d3d" stroke-width="28.600"/>
<circle cx="1558" cy="246.700" r="66.700" stroke="#3fce3f" stroke-width="28.600" pathLength="100" stroke-dasharray="58.160 41.840"/>
</g>
<path d="M1558 165.700v29M1518.200 317.200L1532.300 292.300" stroke="#dfe6ea" stroke-width="1.600" fill="none"/>
<text x="1558.500" y="248" class="m gr" style="font-size:21px">1.39</text>

<!-- avg bars -->
<rect x="1758.500" y="161.500" width="30" height="219" fill="#84d58d" stroke="#49c74f"/>
<rect x="1758" y="380" width="31" height="55" fill="#3dcd3d"/>
<rect x="1791" y="434" width="31" height="46" fill="#dd3c3c"/>
<rect x="1791.500" y="480" width="30" height="70" fill="#d6888c" stroke="#c54a4a"/>
<text x="1752" y="372.500" class="e gr" style="font-size:10.800px">Average</text>
<text x="1752" y="388.500" class="e gr" style="font-size:10.800px">$22.79</text>
<text x="1826" y="471" class="rd" style="font-size:10.800px">Average</text>
<text x="1826" y="487" class="rd" style="font-size:10.800px">-$18.89</text>
<text x="1805" y="559" class="m rd" style="font-size:11.400px">Loss of worst trade: -$48.29</text>

<!-- trade distribution -->
<text x="1412" y="384" class="e" style="font-size:25.600px;fill:#000">Total:</text><text x="1416.500" y="384" style="font-size:25.600px;fill:#000">56</text>
<text x="1412" y="414" class="e gr" style="font-size:25.600px">Winning:</text><text x="1416.500" y="414" class="gr" style="font-size:25.600px">30</text>
<text x="1412" y="444" class="e" style="font-size:25.600px;fill:#000">Neutral:</text><text x="1416.500" y="444" style="font-size:25.600px;fill:#000">0</text>
<text x="1412" y="474" class="e rd" style="font-size:25.600px">Losing:</text><text x="1416.500" y="474" class="rd" style="font-size:25.600px">26</text>
<text x="1557" y="388" class="m gr" style="font-size:33.500px">$683.68</text>
<text x="1557" y="469" class="m rd" style="font-size:33.500px">-$491.06</text>
<text x="1377.500" y="549" class="m rd" style="font-size:33.500px">-$136.00</text>
<text x="1557" y="549" class="m gr" style="font-size:33.500px">$230.46</text>

<!-- gauge -->
<path d="M1308 721.700A70 70 0 0 1 1448 721.700H1423.700A45.700 45.700 0 0 0 1332.300 721.700Z" fill="#9db9c6"/>
<path d="M1308 721.700A70 70 0 0 1 1311.500 700L1334.500 707.500A45.700 45.700 0 0 0 1332.300 721.700Z" fill="#6fa3ff"/>
<path d="M1311.500 700L1334.500 707.500" stroke="#dfe6ea" stroke-width="1.400"/>
<text x="1377.500" y="711" class="m" style="font-size:21.400px;fill:#000">8.8%</text>

<!-- clock -->
<circle cx="1377.500" cy="906" r="67.500" fill="url(#gRing)"/>
<circle cx="1377.500" cy="906" r="54" fill="#fff"/>
<path d="M1341.700 880A47 47 0 0 1 1415 880L1378 901Z" fill="#dde2e5"/>
<path d="M1336 882A50 50 0 0 1 1419 882" fill="none" stroke="#a0aeb6" stroke-width="3"/>
<path d="M1415 878l6 3-5 4z" fill="#a0aeb6"/>
<text x="1377" y="880" class="m" style="font-size:25px;fill:#a0aeb6">24</text>
<path d="M1351.700 891l21.600 14M1412.300 886l-29 18" stroke="#9aa8b0" stroke-width="3.500" stroke-linecap="round"/>
<circle cx="1377.500" cy="907" r="5.500" fill="#fff" stroke="#9aa8b0" stroke-width="2.500"/>
<circle cx="1330.700" cy="906.700" r="2.300" fill="#9aa8b0"/><circle cx="1424.300" cy="906.700" r="2.300" fill="#9aa8b0"/>
<polygon points="1329,917 1428,917 1428,963 1329,963" fill="#fff" stroke="#999" stroke-width=".6"/>
<text x="1377.700" y="941" class="m" style="font-size:28px;fill:#000">0.82</text>
<path d="M1323.300 939.300C1323.300 925 1338 911 1358.300 914.500L1358.300 918.500C1347 917 1336.700 926 1336.700 939.300z" fill="#f0494d"/>
<path d="M1313.300 939.300H1343.300L1329 958.300z" fill="#f0565a"/>
<path d="M1420 941.700C1420 955 1412 962 1398.300 962L1398.300 965.500C1420 968 1437 958 1436.700 941.700z" fill="#14a814"/>
<path d="M1413.300 941.700H1444L1428.300 921.700z" fill="#2fc22f"/>

<!-- gross perf -->
<rect x="1468" y="606" width="445" height="407" fill="#fff"/>
<rect x="1468.500" y="606.500" width="394" height="387" fill="url(#gPlot)" stroke="#7c939e"/>
<g stroke="#bcc8d4" fill="none">
<path d="M1469 613.500h393M1469 643.500h393M1469 673.500h393M1469 704.500h393M1469 734.500h393M1469 764.500h393M1469 795.500h393M1469 825.500h393M1469 886.500h393M1469 916.500h393M1469 946.500h393M1469 977.500h393"/>
<path d="M1517.500 607v386M1566.500 607v386M1616.500 607v386M1665.500 607v386M1714.500 607v386M1764.500 607v386M1813.500 607v386"/>
</g>
<path d="M1517.500 993v4M1566.500 993v4M1616.500 993v4M1665.500 993v4M1714.500 993v4M1764.500 993v4M1813.500 993v4" stroke="#7c939e" fill="none"/>
<g stroke="#12931e" fill="#3dcd3d">
<rect x="1505.500" y="813.500" width="23" height="42"/>
<rect x="1555.500" y="720.500" width="23" height="135"/>
<rect x="1604.500" y="837.500" width="23" height="18"/>
<rect x="1703.500" y="638.500" width="23" height="217"/>
<rect x="1752.500" y="771.500" width="23" height="84"/>
<rect x="1802.500" y="661.500" width="23" height="194"/>
</g>
<rect x="1654.500" y="855.500" width="23" height="107" fill="#dd3c3c" stroke="#a81010"/>
<path d="M1469 855.500h393" stroke="#3333cc" stroke-width="1.200"/>
<path stroke="#7c939e" fill="none" d="M1862 613.500h5M1862 643.500h5M1862 673.500h5M1862 704.500h5M1862 734.500h5M1862 764.500h5M1862 795.500h5M1862 825.500h5M1862 855.500h5M1862 886.500h5M1862 916.500h5M1862 946.500h5M1862 977.500h5"/>
<g>
<text x="1869" y="613.500" class="ax">80</text><text x="1869" y="643.500" class="ax">70</text><text x="1869" y="673.500" class="ax">60</text><text x="1869" y="704" class="ax">50</text><text x="1869" y="734" class="ax">40</text><text x="1869" y="764" class="ax">30</text><text x="1869" y="795" class="ax">20</text><text x="1869" y="825" class="ax">10</text><text x="1869" y="855" class="ax">0</text><text x="1869" y="886" class="ax">-10</text><text x="1869" y="916" class="ax">-20</text><text x="1869" y="946" class="ax">-30</text><text x="1869" y="977" class="ax">-40</text>
</g>
<rect x="1867.500" y="652.500" width="31" height="16" fill="#f8c80b" stroke="#b8b080"/>
<text x="1883" y="661" class="m" style="font-size:10.800px">63.91</text>
<text x="1470" y="987" style="font-size:10.800px">IT-Finance.com</text>
<g>
<text x="1517.500" y="1005" class="m ax">Jul</text><text x="1566.500" y="1005" class="m ax">Aug</text><text x="1616.500" y="1005" class="m ax">Sep</text><text x="1665.700" y="1005" class="m ax">Oct</text><text x="1714.400" y="1005" class="m ax">Nov</text><text x="1764.400" y="1005" class="m ax">Dec</text><text x="1813.600" y="1005" class="m b" style="font-size:12.500px">2023</text>
</g>

<!-- right status -->
<rect x="1298" y="1018" width="621" height="19" fill="url(#gStat)"/>
<path d="M1298 1018.500h621M1298 1036.500h621" stroke="#6f8896"/>
<text x="1301" y="1028.500" style="font-size:10.800px">The statistics above relate to past data. Past performance is not indicative of future results.</text>
</svg>
</body></html>
